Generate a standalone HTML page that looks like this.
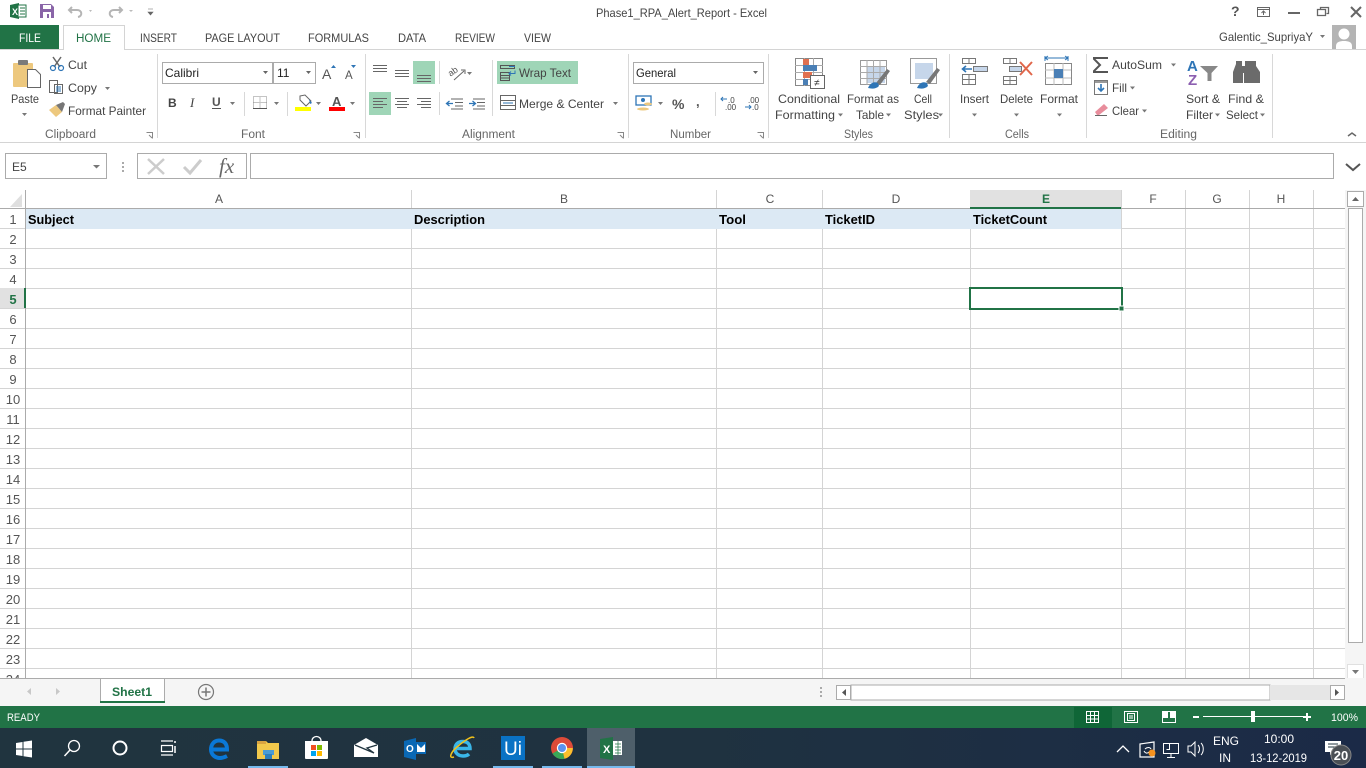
<!DOCTYPE html>
<html><head><meta charset="utf-8"><title>Phase1_RPA_Alert_Report - Excel</title>
<style>
html,body{margin:0;padding:0;width:1366px;height:768px;overflow:hidden;background:#fff}
svg{display:block;position:absolute;left:0;top:0}
text{font-family:"Liberation Sans",sans-serif;font-size:12px;fill:#444}
.t{font-size:11.5px;fill:#444}
.g{fill:#666;font-size:11.5px}
.c{font-family:"Liberation Sans",sans-serif;font-weight:bold;font-size:13px;fill:#000}
.r{font-size:13px;fill:#555;text-anchor:middle}
.h{font-size:12px;fill:#555;text-anchor:middle}
.w{fill:#fff}
.ln{fill:none;stroke:#666;stroke-width:1}
</style></head><body>
<svg width="1366" height="768" viewBox="0 0 1366 768" xmlns="http://www.w3.org/2000/svg">
<defs><linearGradient id="tb" x1="0" x2="1" y1="0" y2="0"><stop offset="0" stop-color="#20343f"/><stop offset=".5" stop-color="#1f3240"/><stop offset="1" stop-color="#1b2a47"/></linearGradient></defs>
<rect width="1366" height="768" fill="#fff"/>

<!-- title bar -->
<path d="M10 5l9-2v16l-9-2z" fill="#217346"/><path d="M18 5h8v12h-8z" fill="#fff" stroke="#217346"/><path d="M20 8h5M20 11h5M20 14h5" stroke="#217346"/>
<text x="12" y="15" class="w" style="font-size:9px;font-weight:bold">X</text>
<path d="M40 4h11l3 3v11H40z" fill="#8a65a8"/><rect x="43" y="5" width="8" height="4" fill="#fff"/><rect x="43" y="12" width="8" height="6" fill="#fff"/><rect x="47" y="14" width="2" height="4" fill="#8a65a8"/>
<path d="M72 7l-3 3 3 3M69 10h8c5 0 6 6 1 7" fill="none" stroke="#b5b5b5" stroke-width="2"/>
<path d="M89 10l3 0-1.500 2z" fill="#bbb"/>
<path d="M119 7l3 3-3 3M122 10h-8c-5 0-6 6-1 7" fill="none" stroke="#b5b5b5" stroke-width="2"/>
<path d="M129 10h4l-2 2z" fill="#bbb"/>
<path d="M148 9h5M148 12h5l-2.500 3z" fill="#666" stroke="#666" stroke-width=".6"/>
<text x="596" y="17" textLength="171" lengthAdjust="spacingAndGlyphs">Phase1_RPA_Alert_Report - Excel</text>
<text x="1231" y="16" style="font-size:14px;font-weight:bold;fill:#555">?</text>
<rect x="1257.500" y="7.500" width="12" height="9" fill="none" stroke="#666"/><path d="M1257 9.500h13M1263.500 15v-4M1261.500 13l2-2 2 2" fill="none" stroke="#666"/>
<rect x="1288" y="12" width="12" height="2" fill="#666"/>
<path d="M1320.500 9.500v-2h8v6h-2M1317.500 9.500h8v6h-8z" fill="none" stroke="#666" stroke-width="1.300"/>
<path d="M1351 7l10 10M1361 7l-10 10" stroke="#666" stroke-width="2"/>

<!-- tabs -->
<rect x="0" y="25" width="59" height="25" fill="#217346"/>
<text x="19" y="42" class="t w" textLength="22" lengthAdjust="spacingAndGlyphs" style="fill:#fff">FILE</text>
<path d="M63.500 50V25.500H124.500V50" fill="#fff" stroke="#d4d4d4"/>
<path d="M0 49.500H63M124 49.500H1366" stroke="#d4d4d4"/>
<text x="76" y="42" class="t" textLength="35" lengthAdjust="spacingAndGlyphs" style="fill:#217346">HOME</text>
<text x="140" y="42" class="t" textLength="37" lengthAdjust="spacingAndGlyphs">INSERT</text>
<text x="205" y="42" class="t" textLength="75" lengthAdjust="spacingAndGlyphs">PAGE LAYOUT</text>
<text x="308" y="42" class="t" textLength="61" lengthAdjust="spacingAndGlyphs">FORMULAS</text>
<text x="398" y="42" class="t" textLength="28" lengthAdjust="spacingAndGlyphs">DATA</text>
<text x="455" y="42" class="t" textLength="40" lengthAdjust="spacingAndGlyphs">REVIEW</text>
<text x="524" y="42" class="t" textLength="27" lengthAdjust="spacingAndGlyphs">VIEW</text>
<text x="1219" y="41" textLength="94" lengthAdjust="spacingAndGlyphs">Galentic_SupriyaY</text>
<path d="M1320 35h5l-2.500 3z" fill="#777"/>
<rect x="1332" y="25" width="24" height="24" fill="#b4b4b4"/>
<circle cx="1344" cy="34" r="5.500" fill="#fff"/><path d="M1336 49v-3c0-4 4-5 8-5s8 1 8 5v3z" fill="#fff"/>

<!-- ribbon separators -->
<path d="M157.500 54V138M365.500 54V138M628.500 54V138M768.500 54V138M949.500 54V138M1086.500 54V138M1272.500 54V138" stroke="#d8d8d8"/>
<path d="M0 142.500H1366" stroke="#d4d4d4"/>

<!-- clipboard -->
<rect x="13" y="63" width="20" height="24" rx="1" fill="#edc87e"/>
<rect x="18" y="60" width="10" height="5" rx="1" fill="#7a7a7a"/>
<path d="M27.500 69.500h8l5 5v13h-13z" fill="#fff" stroke="#666"/>
<text x="11" y="103" textLength="28" lengthAdjust="spacingAndGlyphs">Paste</text>
<path d="M22 113h5l-2.500 3z" fill="#777"/>
<path d="M53 57l7 10M61 57l-7 10" stroke="#666" stroke-width="1.500"/><circle cx="53" cy="68" r="2.500" fill="none" stroke="#2e75b6" stroke-width="1.200"/><circle cx="61" cy="68" r="2.500" fill="none" stroke="#2e75b6" stroke-width="1.200"/>
<text x="68" y="69" textLength="19" lengthAdjust="spacingAndGlyphs">Cut</text>
<path d="M49.500 80.500h8v12h-8zM54.500 84.500h8v9h-8z" fill="#fff" stroke="#666"/><path d="M56 87h5M56 89h5M56 91h5" stroke="#2e75b6"/>
<text x="68" y="92" textLength="29" lengthAdjust="spacingAndGlyphs">Copy</text>
<path d="M105 87h5l-2.500 3z" fill="#777"/>
<path d="M49 110l7-5 6 7-6 5z" fill="#edc87e"/><path d="M56 105l7-3 2 2-3 8z" fill="#777"/>
<text x="68" y="115" textLength="78" lengthAdjust="spacingAndGlyphs">Format Painter</text>
<text x="45" y="138" class="g" textLength="51" lengthAdjust="spacingAndGlyphs">Clipboard</text>
<path d="M146.500 132.500h6v6M149 135l3 3" fill="none" stroke="#888"/>

<!-- font -->
<rect x="162.500" y="62.500" width="110" height="21" fill="#fff" stroke="#ababab"/>
<rect x="273.500" y="62.500" width="42" height="21" fill="#fff" stroke="#ababab"/>
<text x="165" y="77" textLength="34" lengthAdjust="spacingAndGlyphs" style="fill:#222">Calibri</text>
<text x="277" y="77" style="fill:#222">11</text>
<path d="M263 71h5l-2.500 3zM306 71h5l-2.500 3z" fill="#666"/>
<text x="322" y="79" style="font-size:14px;fill:#555">A</text><path d="M331 68h5l-2.500-3z" fill="#2e75b6"/>
<text x="345" y="79" style="font-size:11.500px;fill:#555">A</text><path d="M351 65h5l-2.500 3z" fill="#2e75b6"/>
<text x="168" y="107" style="font-weight:bold;fill:#444">B</text>
<text x="190" y="107" style="font-style:italic;font-family:'Liberation Serif',serif;font-size:13px;fill:#444">I</text>
<text x="212" y="106" style="font-weight:bold;fill:#555">U</text><path d="M212 108.500h9" stroke="#555" stroke-width="1"/>
<path d="M230 102h5l-2.500 3z" fill="#777"/>
<path d="M244.500 92V116" stroke="#d8d8d8"/>
<path d="M253.500 96.500h13v12h-13zM260 96.500v12M253.500 102.500h13" fill="none" stroke="#888" stroke-dasharray="1 1"/><path d="M253 108.500h14" stroke="#555"/>
<path d="M274 102h5l-2.500 3z" fill="#777"/>
<path d="M287.500 92V116" stroke="#d8d8d8"/>
<path d="M300 96l5-1 6 6-5 5-6-6z" fill="#fff" stroke="#666"/><path d="M309 99l3 4-2 1z" fill="#2e75b6"/>
<rect x="295" y="107" width="16" height="4" fill="#ff0"/>
<path d="M316 102h5l-2.500 3z" fill="#777"/>
<text x="332" y="106" style="font-weight:bold;font-size:13px;fill:#555">A</text>
<rect x="329" y="107" width="16" height="4" fill="#f00"/>
<path d="M350 102h5l-2.500 3z" fill="#777"/>
<text x="241" y="138" class="g" textLength="24" lengthAdjust="spacingAndGlyphs">Font</text>
<path d="M353.500 132.500h6v6M356 135l3 3" fill="none" stroke="#888"/>

<!-- alignment -->
<rect x="413" y="61" width="22" height="23" fill="#9fd5b7"/>
<rect x="369" y="92" width="22" height="23" fill="#9fd5b7"/>
<rect x="497" y="61" width="81" height="23" fill="#9fd5b7"/>
<path d="M373 65.500h14M373 68.500h14M373 71.500h14M395 70.500h14M395 73.500h14M395 76.500h14M417 75.500h14M417 78.500h14M417 81.500h14" stroke="#666"/>
<path d="M373 98.500h14M373 101.500h10M373 104.500h14M373 107.500h10M395 98.500h14M397 101.500h10M395 104.500h14M397 107.500h10M417 98.500h14M421 101.500h10M417 104.500h14M421 107.500h10" stroke="#666"/>
<path d="M439.500 61V84M439.500 92V115M492.500 60V116" stroke="#d8d8d8"/>
<text x="448" y="75" style="font-size:9px;fill:#555" transform="rotate(-35 452 72)">ab</text><path d="M454 80l10-9M461 70h4v4" fill="none" stroke="#666"/>
<path d="M467 72h5l-2.500 3z" fill="#777"/>
<path d="M451 99h12M455 102.500h8M455 106h8M451 109h12" stroke="#666"/><path d="M453 103.500h-6m2.500-2.500l-3 2.500 3 2.500" fill="none" stroke="#2e75b6" stroke-width="1.300"/>
<path d="M473 99h12M477 102.500h8M477 106h8M473 109h12" stroke="#666"/><path d="M469 103.500h6m-2.500-2.500l3 2.500-3 2.500" fill="none" stroke="#2e75b6" stroke-width="1.300"/>
<path d="M500.500 65.500h14v3h-14zM500.500 72.500h9v8h-9zM500.500 75.500h9M500.500 78h9" fill="none" stroke="#555"/><path d="M509 66.500h6M515 70.500v3h-6m2-2l-2 2 2 2" fill="none" stroke="#2e75b6"/>
<text x="519" y="77" textLength="52" lengthAdjust="spacingAndGlyphs">Wrap Text</text>
<path d="M500.500 95.500h15v14h-15zM500.500 100.500h15M500.500 105.500h15" fill="#fff" stroke="#666"/><path d="M503 103h10" stroke="#2e75b6"/>
<text x="519" y="108" textLength="85" lengthAdjust="spacingAndGlyphs">Merge &amp; Center</text>
<path d="M613 102h5l-2.500 3z" fill="#777"/>
<text x="462" y="138" class="g" textLength="53" lengthAdjust="spacingAndGlyphs">Alignment</text>
<path d="M617.500 132.500h6v6M620 135l3 3" fill="none" stroke="#888"/>

<!-- number -->
<rect x="633.500" y="62.500" width="130" height="21" fill="#fff" stroke="#ababab"/>
<text x="636" y="77" textLength="40" lengthAdjust="spacingAndGlyphs" style="fill:#222">General</text>
<path d="M753 71h5l-2.500 3z" fill="#666"/>
<rect x="636" y="96" width="15" height="9" fill="none" stroke="#2e75b6" stroke-width="1.300"/><circle cx="643" cy="100" r="2" fill="#2e75b6"/>
<ellipse cx="643" cy="109" rx="6" ry="1.500" fill="#edc87e"/><ellipse cx="648" cy="104" rx="4" ry="1.500" fill="#edc87e"/>
<path d="M658 102h5l-2.500 3z" fill="#777"/>
<text x="672" y="109" style="font-size:14px;font-weight:bold;fill:#555">%</text>
<text x="696" y="106" style="font-size:13px;font-weight:bold;fill:#555">,</text>
<path d="M715.500 92V116" stroke="#d8d8d8"/>
<text x="728" y="103" style="font-size:8px;fill:#444">.0</text><text x="725" y="110" style="font-size:8px;fill:#444">.00</text>
<path d="M727 99h-6m2-2l-2 2 2 2" fill="none" stroke="#2e75b6"/>
<text x="748" y="103" style="font-size:8px;fill:#444">.00</text><text x="752" y="110" style="font-size:8px;fill:#444">.0</text>
<path d="M745 107h6m-2-2l2 2-2 2" fill="none" stroke="#2e75b6"/>
<text x="670" y="138" class="g" textLength="41" lengthAdjust="spacingAndGlyphs">Number</text>
<path d="M757.500 132.500h6v6M760 135l3 3" fill="none" stroke="#888"/>

<!-- styles -->
<rect x="795.500" y="58.500" width="27" height="27" fill="#fff" stroke="#888"/>
<path d="M795 65.500h28M795 72.500h28M795 79.500h28M804.500 58v28M813.500 58v28" stroke="#aaa"/>
<rect x="803" y="59" width="6" height="6" fill="#e07050"/><rect x="803" y="65" width="14" height="6" fill="#4a7fb5"/><rect x="803" y="72" width="9" height="6" fill="#e07050"/><rect x="803" y="79" width="5" height="6" fill="#4a7fb5"/>
<rect x="810.500" y="75.500" width="14" height="13" fill="#fff" stroke="#666"/>
<text x="814" y="86" style="font-size:10px;fill:#333">≠</text>
<text x="778" y="103" textLength="62" lengthAdjust="spacingAndGlyphs">Conditional</text>
<text x="775" y="119" textLength="60" lengthAdjust="spacingAndGlyphs">Formatting</text>
<path d="M838 113.500h5l-2.500 3z" fill="#777"/>
<rect x="860.500" y="60.500" width="26" height="24" fill="#fff" stroke="#999"/><rect x="867" y="66" width="18" height="17" fill="#c6d6ea"/>
<path d="M860 66.500h27M860 72.500h27M860 78.500h27M867 60v25M873.500 60v25M880 60v25" stroke="#aaa"/>
<path d="M876 83l11-14 3 2-10 14z" fill="#777"/><path d="M868 88c2-5 6-7 10-5l1 3c-3 3-7 3-11 2z" fill="#2e75b6"/>
<text x="847" y="103" textLength="52" lengthAdjust="spacingAndGlyphs">Format as</text>
<text x="856" y="119" textLength="28" lengthAdjust="spacingAndGlyphs">Table</text>
<path d="M886 113.500h5l-2.500 3z" fill="#777"/>
<rect x="910.500" y="58.500" width="26" height="25" fill="#fff" stroke="#999"/><rect x="915" y="63" width="18" height="16" fill="#c6d6ea"/>
<path d="M926 82l11-14 3 2-10 14z" fill="#777"/><path d="M917 88c2-5 6-7 10-5l1 3c-3 3-7 3-11 2z" fill="#2e75b6"/>
<text x="914" y="103" textLength="18" lengthAdjust="spacingAndGlyphs">Cell</text>
<text x="904" y="119" textLength="35" lengthAdjust="spacingAndGlyphs">Styles</text>
<path d="M938 113.500h5l-2.500 3z" fill="#777"/>
<text x="844" y="138" class="g" textLength="29" lengthAdjust="spacingAndGlyphs">Styles</text>

<!-- cells -->
<path d="M962.500 58.500h13v5h-13zM969 58.500v5M962.500 74.500h13v10h-13zM962.500 79.500h13M969 74.500v10" fill="#fff" stroke="#777"/>
<rect x="973.500" y="66.500" width="14" height="5" fill="#c6d6ea" stroke="#777"/><path d="M972 69h-9m3-3l-3.500 3 3.500 3" fill="none" stroke="#2e75b6" stroke-width="1.600"/>
<text x="960" y="103" textLength="29" lengthAdjust="spacingAndGlyphs">Insert</text>
<path d="M972 113.500h5l-2.500 3z" fill="#777"/>
<path d="M1003.500 58.500h13v5h-13zM1010 58.500v5M1003.500 76.500h13v8h-13zM1003.500 80.500h13M1010 76.500v8" fill="#fff" stroke="#777"/>
<rect x="1009.500" y="66.500" width="12" height="5" fill="#c6d6ea" stroke="#777"/>
<path d="M1020 62l12 13M1032 62l-12 13" stroke="#e0664a" stroke-width="2"/>
<text x="1000" y="103" textLength="33" lengthAdjust="spacingAndGlyphs">Delete</text>
<path d="M1014 113.500h5l-2.500 3z" fill="#777"/>
<path d="M1045 58h23M1045 56v5M1068 56v5" fill="none" stroke="#2e75b6"/><path d="M1048 56l-3 2 3 2M1065 56l3 2-3 2" fill="none" stroke="#2e75b6"/>
<rect x="1045.500" y="63.500" width="26" height="21" fill="#fff" stroke="#888"/><path d="M1045 70h26M1045 78h26M1054 63v22M1063 63v22" stroke="#bbb"/><rect x="1054" y="69" width="9" height="9" fill="#4a7fb5"/>
<text x="1040" y="103" textLength="38" lengthAdjust="spacingAndGlyphs">Format</text>
<path d="M1057 113.500h5l-2.500 3z" fill="#777"/>
<text x="1005" y="138" class="g" textLength="24" lengthAdjust="spacingAndGlyphs">Cells</text>

<!-- editing -->
<path d="M1108 58h-14v1l6 6-6 6v1h14" fill="none" stroke="#555" stroke-width="2"/>
<text x="1112" y="69" textLength="50" lengthAdjust="spacingAndGlyphs">AutoSum</text>
<path d="M1171 63.500h5l-2.500 3z" fill="#777"/>
<rect x="1094.500" y="80.500" width="13" height="14" fill="#fff" stroke="#777"/><path d="M1095 81h12v2h-12z" fill="#999"/><path d="M1101 84v7m-3-3l3 3 3-3" fill="none" stroke="#2e75b6" stroke-width="1.600"/>
<text x="1112" y="92" textLength="15" lengthAdjust="spacingAndGlyphs">Fill</text>
<path d="M1130 86.500h5l-2.500 3z" fill="#777"/>
<path d="M1095 112l9-8 4 4-9 7h-2z" fill="#e88d9c"/><path d="M1095 115.500h12" stroke="#666"/>
<text x="1112" y="115" textLength="27" lengthAdjust="spacingAndGlyphs">Clear</text>
<path d="M1142 109.500h5l-2.500 3z" fill="#777"/>
<text x="1187" y="71" style="font-size:15px;font-weight:bold;fill:#2e75b6">A</text>
<text x="1188" y="85" style="font-size:15px;font-weight:bold;fill:#8c5fb0">Z</text>
<path d="M1200 66h18l-6.500 7v8h-4v-8z" fill="#888"/>
<text x="1186" y="103" textLength="34" lengthAdjust="spacingAndGlyphs">Sort &amp;</text>
<text x="1186" y="119" textLength="27" lengthAdjust="spacingAndGlyphs">Filter</text>
<path d="M1215 113.500h5l-2.500 3z" fill="#777"/>
<path d="M1233 83V72l3-8v-3h6v5h3v-5h6v3l3 8v11h-10V73h-1v10z" fill="#6b6b6b" transform="translate(0 0) scale(1 1)"/>
<path d="M1254 72l6 0v11h-6zM1251 61h5v5l4 6h-9z" fill="#6b6b6b"/>
<text x="1228" y="103" textLength="36" lengthAdjust="spacingAndGlyphs">Find &amp;</text>
<text x="1226" y="119" textLength="32" lengthAdjust="spacingAndGlyphs">Select</text>
<path d="M1260 113.500h5l-2.500 3z" fill="#777"/>
<text x="1160" y="138" class="g" textLength="37" lengthAdjust="spacingAndGlyphs">Editing</text>
<path d="M1348 136l4-3 4 3" fill="none" stroke="#666" stroke-width="1.500"/>

<!-- formula bar -->
<rect x="5.500" y="153.500" width="101" height="25" fill="#fff" stroke="#ababab"/>
<text x="12" y="171" style="font-size:12px;fill:#444">E5</text>
<path d="M93 165h7l-3.500 3.500z" fill="#777"/>
<path d="M122 162h2v2h-2zM122 166h2v2h-2zM122 170h2v2h-2z" fill="#aaa"/>
<rect x="137.500" y="153.500" width="109" height="25" fill="#fff" stroke="#ababab"/>
<rect x="250.500" y="153.500" width="1083" height="25" fill="#fff" stroke="#ababab"/>
<path d="M148 159l16 15M164 159l-16 15" stroke="#ccc" stroke-width="2.500"/>
<path d="M184 167l6 6 11-13" fill="none" stroke="#ccc" stroke-width="3"/>
<text x="219" y="173" style="font-family:'Liberation Serif',serif;font-style:italic;font-size:21px;fill:#666">fx</text>
<path d="M1346 164l7 6 7-6" fill="none" stroke="#555" stroke-width="2"/>

<!-- grid -->
<rect x="26" y="209" width="1095" height="20" fill="#dce9f4"/>
<path d="M0 228.500H25M1121 228.500H1345M0 248.500H1345M0 268.500H1345M0 288.500H1345M0 308.500H1345M0 328.500H1345M0 348.500H1345M0 368.500H1345M0 388.500H1345M0 408.500H1345M0 428.500H1345M0 448.500H1345M0 468.500H1345M0 488.500H1345M0 508.500H1345M0 528.500H1345M0 548.500H1345M0 568.500H1345M0 588.500H1345M0 608.500H1345M0 628.500H1345M0 648.500H1345M0 668.500H1345" stroke="#d4d4d4"/>
<path d="M411.500 190V208M716.500 190V208M822.500 190V208M970.500 190V208M1121.500 190V678M1185.500 190V678M1249.500 190V678M1313.500 190V678M411.500 229V678M716.500 229V678M822.500 229V678M970.500 229V678" stroke="#d4d4d4"/>
<rect x="970" y="190" width="151" height="18" fill="#e1e1e1"/>
<rect x="0" y="288" width="25" height="20" fill="#e1e1e1"/>
<path d="M0 208.500H1345" stroke="#ababab"/>
<path d="M25.500 190V678" stroke="#ababab"/>
<path d="M22 194v13H10z" fill="#dfdfdf"/>
<rect x="970" y="207" width="151" height="2" fill="#217346"/>
<rect x="24" y="288" width="2" height="20" fill="#217346"/>
<text x="219" y="203" class="h">A</text><text x="564" y="203" class="h">B</text><text x="770" y="203" class="h">C</text><text x="896" y="203" class="h">D</text>
<text x="1046" y="203" class="h" style="font-weight:bold;fill:#217346">E</text>
<text x="1153" y="203" class="h">F</text><text x="1217" y="203" class="h">G</text><text x="1281" y="203" class="h">H</text>
<text x="13" y="224" class="r">1</text><text x="13" y="244" class="r">2</text><text x="13" y="264" class="r">3</text><text x="13" y="284" class="r">4</text>
<text x="13" y="304" class="r" style="font-weight:bold;fill:#217346">5</text>
<text x="13" y="324" class="r">6</text><text x="13" y="344" class="r">7</text><text x="13" y="364" class="r">8</text><text x="13" y="384" class="r">9</text><text x="13" y="404" class="r">10</text><text x="13" y="424" class="r">11</text><text x="13" y="444" class="r">12</text><text x="13" y="464" class="r">13</text><text x="13" y="484" class="r">14</text><text x="13" y="504" class="r">15</text><text x="13" y="524" class="r">16</text><text x="13" y="544" class="r">17</text><text x="13" y="564" class="r">18</text><text x="13" y="584" class="r">19</text><text x="13" y="604" class="r">20</text><text x="13" y="624" class="r">21</text><text x="13" y="644" class="r">22</text><text x="13" y="664" class="r">23</text><text x="13" y="684" class="r">24</text>
<text x="28" y="224" class="c" textLength="46" lengthAdjust="spacingAndGlyphs">Subject</text>
<text x="414" y="224" class="c" textLength="71" lengthAdjust="spacingAndGlyphs">Description</text>
<text x="719" y="224" class="c" textLength="27" lengthAdjust="spacingAndGlyphs">Tool</text>
<text x="825" y="224" class="c" textLength="50" lengthAdjust="spacingAndGlyphs">TicketID</text>
<text x="973" y="224" class="c" textLength="74" lengthAdjust="spacingAndGlyphs">TicketCount</text>
<rect x="970" y="288" width="152" height="21" fill="none" stroke="#217346" stroke-width="2"/>
<rect x="1119" y="306" width="5" height="5" fill="#217346" stroke="#fff" stroke-width="1"/>

<!-- vertical scrollbar -->
<rect x="1345" y="190" width="21" height="490" fill="#f5f5f5"/>
<rect x="1347.500" y="191.500" width="16" height="15" fill="#fff" stroke="#ababab"/>
<path d="M1352 201h7l-3.500-4z" fill="#666"/>
<rect x="1348.500" y="208.500" width="14" height="434" fill="#fff" stroke="#ababab"/>
<rect x="1347.500" y="664.500" width="16" height="15" fill="#fff" stroke="#e0e0e0"/>
<path d="M1352 670h7l-3.500 4z" fill="#777"/>

<!-- sheet tabs -->
<rect x="0" y="678" width="1366" height="28" fill="#f5f5f5"/>
<path d="M0 678.500H100M165 678.500H1345" stroke="#ababab"/>
<path d="M100.500 703V678.500H164.500V703" fill="#fff" stroke="#ababab"/>
<rect x="100" y="701" width="65" height="2" fill="#217346"/>
<text x="112" y="696" textLength="40" lengthAdjust="spacingAndGlyphs" style="font-weight:bold;fill:#217346">Sheet1</text>
<path d="M31 688v7l-4-3.500zM56 688v7l4-3.500z" fill="#c8c8c8"/>
<circle cx="206" cy="692" r="7.500" fill="none" stroke="#777" stroke-width="1.200"/><path d="M201.500 692h9M206 687.500v9" stroke="#777" stroke-width="1.500"/>
<path d="M820 687h2v2h-2zM820 691h2v2h-2zM820 695h2v2h-2z" fill="#aaa"/>
<rect x="836.500" y="685.500" width="14" height="14" fill="#fff" stroke="#ababab"/>
<path d="M846 689v7l-4-3.500z" fill="#555"/>
<rect x="851" y="685" width="419" height="15" fill="#fff" stroke="#ababab"/>
<rect x="1270" y="685" width="60" height="15" fill="#e6e6e6"/>
<rect x="1330.500" y="685.500" width="14" height="14" fill="#fff" stroke="#ababab"/>
<path d="M1335 689v7l4-3.500z" fill="#555"/>

<!-- status bar -->
<rect x="0" y="706" width="1366" height="22" fill="#217346"/>
<text x="7" y="721" textLength="33" lengthAdjust="spacingAndGlyphs" style="fill:#fff;font-size:11px">READY</text>
<rect x="1074" y="707" width="38" height="21" fill="#0f6637"/>
<path d="M1086.500 711.500h12v11h-12zM1086.500 715.500h12M1086.500 719h12M1090.500 711.500v11M1094.500 711.500v11" fill="none" stroke="#fff"/>
<path d="M1124.500 711.500h13v11h-13z" fill="none" stroke="#fff"/><path d="M1127.500 713.500h7v7h-7zM1129 716h4M1129 718h4" fill="none" stroke="#fff"/>
<path d="M1162.500 711.500h13v11h-13z" fill="none" stroke="#fff"/><path d="M1163 712h5v6h-5zM1170 712h5v6h-5z" fill="#fff"/>
<path d="M1193 716.500h5M1203 716.500h100" stroke="#fff"/><rect x="1193" y="716" width="6" height="2" fill="#fff"/>
<rect x="1251" y="711" width="4" height="11" fill="#fff"/>
<path d="M1307 713v8M1303 717h8" stroke="#fff" stroke-width="2"/>
<text x="1331" y="721" textLength="27" lengthAdjust="spacingAndGlyphs" style="fill:#fff;font-size:11px">100%</text>

<!-- taskbar -->
<rect x="0" y="728" width="1366" height="40" fill="url(#tb)"/>
<path d="M16 743l6.500-1v6.500H16zM23.500 741.800l8.500-1.300v8H23.500zM16 749.500h6.500v6.500l-6.500-1zM23.500 749.500H32v8l-8.500-1.300z" fill="#fff"/>
<circle cx="74" cy="746" r="5.500" fill="none" stroke="#fff" stroke-width="1.300"/><path d="M70 750l-5.500 6" stroke="#fff" stroke-width="1.500"/>
<circle cx="120" cy="748" r="6.500" fill="none" stroke="#fff" stroke-width="2"/>
<path d="M161 741h12M161 755h12M161.500 745.500h11v6h-11z" fill="none" stroke="#fff" stroke-width="1.200"/><path d="M175 741v2M175 746v7" stroke="#fff" stroke-width="1.500"/>
<path d="M213 749.500h14c0-6-3-9-8-9-5 0-8 4-8 9s4 8.500 9 8.500c3 0 5-1 7-2" fill="none" stroke="#0a78d7" stroke-width="4"/>
<path d="M257 741h9l2 2h11v16h-22z" fill="#f2c94c"/><rect x="257" y="741" width="9" height="3" fill="#d9a441"/><rect x="263" y="750" width="11" height="5" fill="#4a9cd6"/><rect x="265" y="754" width="7" height="5" fill="#2e7fbd"/>
<rect x="248" y="766" width="40" height="2" fill="#76b9ed"/>
<path d="M305 741h23v17a1 1 0 0 1-1 1h-21a1 1 0 0 1-1-1z" fill="#fff"/><path d="M312 741c0-6 9-6 9 0" fill="none" stroke="#fff" stroke-width="1.300"/>
<rect x="311" y="745" width="5" height="5" fill="#f25022"/><rect x="317" y="745" width="5" height="5" fill="#7fba00"/><rect x="311" y="751" width="5" height="5" fill="#00a4ef"/><rect x="317" y="751" width="5" height="5" fill="#ffb900"/>
<path d="M354 745l12-7 12 7v12h-24z" fill="#fff"/><path d="M355 745l19 8-7-5 10-3" fill="none" stroke="#20343f" stroke-width="1.300"/>
<path d="M404 741l12-3v22l-12-3z" fill="#0a68b4"/><rect x="415" y="742" width="11" height="12" fill="#0a68b4"/><path d="M417 744l4 4 4-4v8h-8z" fill="#fff"/>
<text x="406" y="752" style="font-size:10px;font-weight:bold;fill:#fff">O</text>
<path d="M456 748.500h14c0-5-3-7-7-7-5 0-8 3-8 7.500s4 7 8 7c3 0 5-1 6-2" fill="none" stroke="#3ab6e8" stroke-width="3.500"/><path d="M454 757c-6 2-3-5 3-10 8-7 16-12 17-9" fill="none" stroke="#f2c21b" stroke-width="1.500"/>
<rect x="501" y="736" width="24" height="24" fill="#0a72c4"/>
<text x="504" y="755" style="font-size:19px;fill:#fff">Ui</text>
<rect x="493" y="766" width="40" height="2" fill="#76b9ed"/>
<circle cx="562" cy="748" r="11" fill="#dd4b39"/><path d="M562 748l-9.500 5.500a11 11 0 0 0 12 5.300z" fill="#3aa757"/><path d="M562 748h10.800a11 11 0 0 1-8.300 10.800z" fill="#fbc02d"/><circle cx="562" cy="748" r="5.200" fill="#fff"/><circle cx="562" cy="748" r="4" fill="#5a93ee"/>
<rect x="542" y="766" width="40" height="2" fill="#76b9ed"/>
<rect x="587" y="728" width="48" height="40" fill="#4e5f6a"/>
<rect x="587" y="766" width="48" height="2" fill="#76b9ed"/>
<path d="M600 739l13-2v23l-13-2z" fill="#217346"/><rect x="613" y="741" width="9" height="14" fill="#fff"/><path d="M615 744h6M615 747h6M615 750h6M615 753h6M618 741v14" stroke="#217346" stroke-width=".7"/>
<text x="603" y="753" style="font-size:11px;font-weight:bold;fill:#fff">X</text>

<path d="M1117 752l6-6 6 6" fill="none" stroke="#fff" stroke-width="1.300"/>
<path d="M1140 744l14-2v15h-14z" fill="none" stroke="#fff" stroke-width="1.200"/><path d="M1145 749c2-2 5-2 6 0M1149 752c-2 2-4 1-5-1" fill="none" stroke="#fff"/><circle cx="1152" cy="753" r="3.500" fill="#f7921e"/>
<path d="M1163.500 743.500h15v10h-15zM1171 754v3M1167 757.500h8M1163.500 743.500h6v6h-3" fill="none" stroke="#fff"/>
<path d="M1188 746h3l4-4v14l-4-4h-3zM1198 745c2 2 2 6 0 8M1201 743c3 3 3 9 0 12" fill="none" stroke="#fff"/>
<text x="1213" y="745" class="w" style="fill:#fff">ENG</text>
<text x="1219" y="762" class="w" style="fill:#fff">IN</text>
<text x="1264" y="743" class="w" style="fill:#fff">10:00</text>
<text x="1250" y="762" textLength="57" lengthAdjust="spacingAndGlyphs" class="w" style="fill:#fff">13-12-2019</text>
<path d="M1325 741h16v11h-8l-3 3v-3h-5z" fill="#fff"/><path d="M1328 744h10M1328 747h10" stroke="#20343f"/>
<circle cx="1341" cy="755" r="10" fill="#4a4f55" stroke="#888"/>
<text x="1341" y="760" style="font-size:13px;font-weight:bold;fill:#fff;text-anchor:middle">20</text>
</svg>
</body></html>
